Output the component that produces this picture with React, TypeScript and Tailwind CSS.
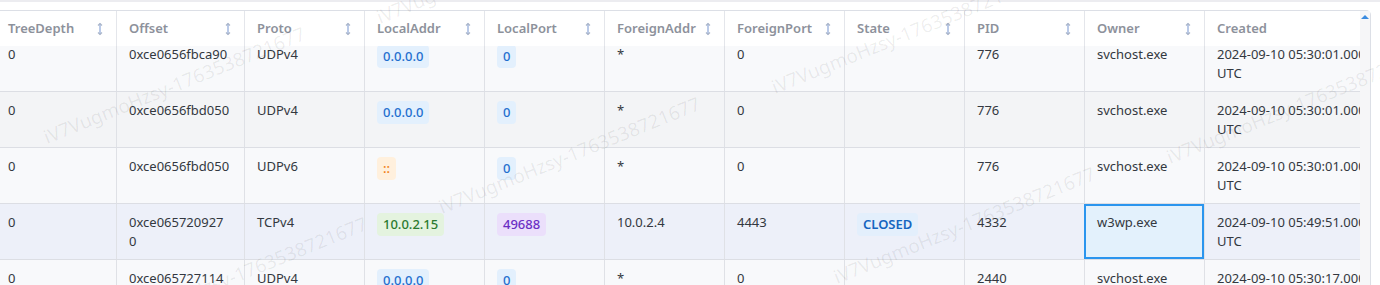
import React from 'react'

type Tone = 'blue' | 'orange' | 'green' | 'purple' | 'state'

interface Tag {
  text: string
  tone: Tone
}

interface Row {
  depth: string
  offset: string
  proto: string
  laddr: Tag
  lport: Tag
  faddr: string
  fport: string
  state?: Tag
  pid: string
  owner: string
  created: string
  active?: boolean
}

const COLUMNS = [
  { key: 'TreeDepth', width: 'w-[116px]', first: true },
  { key: 'Offset', width: 'w-[128px]' },
  { key: 'Proto', width: 'w-[120px]' },
  { key: 'LocalAddr', width: 'w-[120px]' },
  { key: 'LocalPort', width: 'w-[120px]' },
  { key: 'ForeignAddr', width: 'w-[120px]' },
  { key: 'ForeignPort', width: 'w-[120px]' },
  { key: 'State', width: 'w-[120px]' },
  { key: 'PID', width: 'w-[120px]' },
  { key: 'Owner', width: 'w-[120px]' },
  { key: 'Created', width: 'w-[200px]' },
]

const ROWS: Row[] = [
  {
    depth: '0',
    offset: '0xce0656fbca90',
    proto: 'UDPv4',
    laddr: { text: '0.0.0.0', tone: 'blue' },
    lport: { text: '0', tone: 'blue' },
    faddr: '*',
    fport: '0',
    pid: '776',
    owner: 'svchost.exe',
    created: '2024-09-10 05:30:01.000 UTC',
  },
  {
    depth: '0',
    offset: '0xce0656fbd050',
    proto: 'UDPv4',
    laddr: { text: '0.0.0.0', tone: 'blue' },
    lport: { text: '0', tone: 'blue' },
    faddr: '*',
    fport: '0',
    pid: '776',
    owner: 'svchost.exe',
    created: '2024-09-10 05:30:01.000 UTC',
  },
  {
    depth: '0',
    offset: '0xce0656fbd050',
    proto: 'UDPv6',
    laddr: { text: '::', tone: 'orange' },
    lport: { text: '0', tone: 'blue' },
    faddr: '*',
    fport: '0',
    pid: '776',
    owner: 'svchost.exe',
    created: '2024-09-10 05:30:01.000 UTC',
  },
  {
    depth: '0',
    offset: '0xce065720927\n0',
    proto: 'TCPv4',
    laddr: { text: '10.0.2.15', tone: 'green' },
    lport: { text: '49688', tone: 'purple' },
    faddr: '10.0.2.4',
    fport: '4443',
    state: { text: 'CLOSED', tone: 'state' },
    pid: '4332',
    owner: 'w3wp.exe',
    created: '2024-09-10 05:49:51.000 UTC',
    active: true,
  },
  {
    depth: '0',
    offset: '0xce065727114\n0',
    proto: 'UDPv4',
    laddr: { text: '0.0.0.0', tone: 'blue' },
    lport: { text: '0', tone: 'blue' },
    faddr: '*',
    fport: '0',
    pid: '2440',
    owner: 'svchost.exe',
    created: '2024-09-10 05:30:17.000 UTC',
  },
]

// watermark anchors (left end of each string)
const MARKS = [
  [48, 147],
  [443, 217],
  [838, 287],
  [381, 27],
  [776, 97],
  [1171, 167],
  [110, 337],
]

function SortIcon() {
  return (
    <svg width="8" height="14" viewBox="0 0 8 14" fill="none" className="shrink-0">
      <path d="M4 1.5v11" stroke="#a9bde3" strokeWidth="1.6" />
      <path d="M2 3.5 4 1.5l2 2M2 10.5l2 2 2-2" stroke="#a9b4c8" strokeWidth="1.2" />
    </svg>
  )
}

function Badge({ tag }: { tag: Tag }) {
  const tone = {
    blue: 'bg-[#e3f0fd] text-[#1f6fcf]',
    orange: 'bg-[#fff0dd] text-[#f27c12]',
    green: 'bg-[#e4f3df] text-[#2b7a2f]',
    purple: 'bg-[#ebdffb] text-[#6a2ec4]',
    state: 'bg-[#e3effc] text-[#1565c0] font-semibold',
  }[tag.tone]
  return (
    <span className={`inline-block rounded-[4px] px-[6px] py-[2px] leading-[19px] font-medium ${tone}`}>
      {tag.text}
    </span>
  )
}

function Cell({
  width,
  first,
  children,
  selected,
}: {
  width: string
  first?: boolean
  children?: React.ReactNode
  selected?: boolean
}) {
  return (
    <div
      className={`${width} shrink-0 overflow-hidden whitespace-pre-line pt-[9px] leading-[19px] ${
        first ? 'pl-2 pr-3' : 'border-l border-[#dfe1e6] pl-3 pr-3'
      } ${selected ? 'outline-2 -outline-offset-2 outline-[#2b95ee] bg-[#e3f1fc]' : ''}`}
    >
      {children}
    </div>
  )
}

export default function App() {
  return (
    <div className="relative h-[285px] w-[1380px] overflow-hidden bg-white font-['Noto_Sans','Liberation_Sans',sans-serif] text-[13px] text-[#333840]">
      <div className="h-[2px] bg-[#ececf0]" />
      <div className="mt-2 flex w-[1371px] rounded-tr-[5px] border-t border-r border-[#dcdfe6]">
        <div className="w-[1360px] overflow-hidden">
          <div className="flex h-[35px] w-max items-center bg-white font-semibold text-[#8d919b]">
            {COLUMNS.map((c) => (
              <div
                key={c.key}
                className={`${c.width} flex h-full shrink-0 items-center justify-between pr-3 ${
                  c.first ? 'pl-2' : 'border-l border-[#e4e6eb] pl-3'
                }`}
              >
                <span>{c.key}</span>
                {c.key !== 'Created' && <SortIcon />}
              </div>
            ))}
          </div>
          <div className="h-[260px] overflow-hidden">
            <div className="-mt-[10px] w-max">
              {ROWS.map((r, i) => (
                <div
                  key={i}
                  className={`flex h-[56px] border-b border-[#dcdee4] ${
                    r.active ? 'bg-[#edf0f9]' : i % 2 === 0 ? 'bg-[#f8f9fb]' : 'bg-[#f3f4f6]'
                  }`}
                >
                  <Cell width="w-[116px]" first>
                    {r.depth}
                  </Cell>
                  <Cell width="w-[128px]">{r.offset}</Cell>
                  <Cell width="w-[120px]">{r.proto}</Cell>
                  <Cell width="w-[120px]">
                    <Badge tag={r.laddr} />
                  </Cell>
                  <Cell width="w-[120px]">
                    <Badge tag={r.lport} />
                  </Cell>
                  <Cell width="w-[120px]">{r.faddr}</Cell>
                  <Cell width="w-[120px]">{r.fport}</Cell>
                  <Cell width="w-[120px]">{r.state && <Badge tag={r.state} />}</Cell>
                  <Cell width="w-[120px]">{r.pid}</Cell>
                  <Cell width="w-[120px]" selected={r.active}>
                    {r.owner}
                  </Cell>
                  <Cell width="w-[200px]">{r.created}</Cell>
                </div>
              ))}
            </div>
          </div>
        </div>
        <div className="flex w-[10px] flex-col items-center bg-[#f6f6f8]">
          <svg width="8" height="6" viewBox="0 0 8 6" className="mt-[3px]">
            <path d="M0 5 4 1l4 4z" fill="#3b8be0" />
          </svg>
        </div>
      </div>
      <div className="pointer-events-none absolute inset-0">
        {MARKS.map(([x, y], i) => (
          <span
            key={i}
            className="absolute origin-bottom-left -rotate-[22deg] whitespace-nowrap text-[19px] leading-none text-black/[0.07]"
            style={{ left: x, top: y - 19 }}
          >
            iV7VugmoHzsy-1763538721677
          </span>
        ))}
      </div>
    </div>
  )
}
